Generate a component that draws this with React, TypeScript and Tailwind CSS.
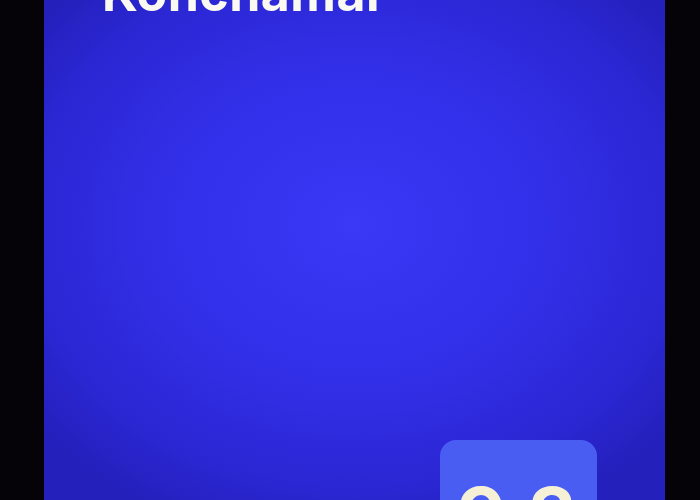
export default function App() {
  return (
    <div className="w-[700px] h-[500px] bg-[#050308] overflow-hidden flex" style={{ fontFamily: "Inter, 'Noto Sans', sans-serif" }}>
      <div className="ml-[44px] w-[621px] h-full flex flex-col justify-between overflow-hidden bg-[radial-gradient(ellipse_65%_65%_at_50%_45%,#3b38f6_0%,#3330ea_45%,#2b27d4_80%,#2420bc_100%)]">
        <div className="pl-[58px] -mt-[32px] text-[50px] leading-none font-bold text-[#fbfaf2] tracking-[0.5px]">Konchamal</div>
        <div className="flex justify-end pr-[68px]">
          <div className="w-[157px] h-[60px] rounded-t-[16px] bg-[#4a5df2] pl-[17px] pt-[36px] text-[76px] leading-none font-bold text-[#f6f1d6] overflow-visible">
            9.3
          </div>
        </div>
      </div>
    </div>
  );
}
